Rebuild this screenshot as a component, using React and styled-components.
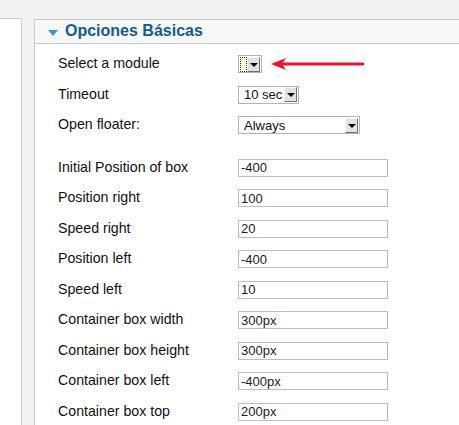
import React from 'react';
import styled, { createGlobalStyle } from 'styled-components';

const GlobalStyle = createGlobalStyle`
  html, body {
    margin: 0;
    padding: 0;
    background: #f2f2f2;
    font-family: "Liberation Sans", Arial, sans-serif;
    overflow: hidden;
  }
`;

const Page = styled.div`
  display: flex;
  gap: 12px;
  height: 425px;
`;

const SidePanel = styled.div`
  width: 21px;
  margin-top: 18px;
  background: #fff;
  border-top: 1px solid #cfcfcf;
  border-right: 1px solid #cfcfcf;
`;

const MainPanel = styled.div`
  flex: 1;
  margin-top: 19px;
  background: #fff;
  border-top: 1px solid #c8c8c8;
  border-left: 1px solid #c8c8c8;
`;

const Header = styled.div`
  display: flex;
  align-items: center;
  gap: 7px;
  height: 23px;
  padding-left: 13px;
  background: #f6f8f8;
  border-bottom: 1px solid #c8c8c8;
`;

const Toggle = styled.span`
  width: 0;
  height: 0;
  margin-top: 2px;
  border-left: 5px solid transparent;
  border-right: 5px solid transparent;
  border-top: 6px solid #3f92d2;
`;

const Title = styled.h3`
  margin: 0 0 2px;
  font-size: 16px;
  font-weight: 700;
  color: #155b8e;
`;

const Body = styled.div`
  padding: 5px 0 0 23px;
`;

const Form = styled.div`
  display: grid;
  grid-template-columns: 180px 1fr;
  grid-auto-rows: 30.5px;
  align-items: center;
  margin-top: ${p => p.$gap || 0}px;
`;

const Label = styled.div`
  font-size: 14.2px;
  color: #111;
  padding-bottom: 2px;
`;

const Control = styled.div`
  display: flex;
  align-items: center;
  gap: 9px;
`;

const SelectBox = styled.div`
  box-sizing: border-box;
  display: flex;
  align-items: center;
  width: ${p => p.$width}px;
  height: 18px;
  border: 1px solid #b4b4b4;
  background: #fff;
`;

const SelectValue = styled.span`
  flex: 1;
  font-size: 13px;
  color: #111;
  padding-left: 5px;
  white-space: nowrap;
  overflow: hidden;
`;

const Focus = styled.span`
  width: 7px;
  height: 15px;
  margin-left: 1px;
  border: 1px dotted #333;
  box-sizing: border-box;
  background: #fffbe0;
`;

const Spacer = styled.span`
  flex: 1;
`;

const DropButton = styled.span`
  box-sizing: border-box;
  display: flex;
  align-items: center;
  justify-content: center;
  width: 13px;
  height: 15px;
  margin-right: 1px;
  background: #e2e2e2;
  border: 1px solid;
  border-color: #f8f8f8 #6f6f6f #6f6f6f #f8f8f8;

  &::after {
    content: '';
    width: 0;
    height: 0;
    margin-top: 1px;
    border-left: 4px solid transparent;
    border-right: 4px solid transparent;
    border-top: 4px solid #000;
  }
`;

const TextInput = styled.input`
  box-sizing: border-box;
  width: 150px;
  height: 18px;
  margin: 0;
  padding: 0 2px;
  border: 1px solid #bdbdbd;
  font-family: "Liberation Sans", Arial, sans-serif;
  font-size: 13px;
  color: #1a1a2a;
  outline: none;
`;

function Select({ width, value, focused }) {
  return (
    <SelectBox $width={width}>
      {focused ? (
        <>
          <Focus />
          <Spacer />
        </>
      ) : (
        <SelectValue>{value}</SelectValue>
      )}
      <DropButton />
    </SelectBox>
  );
}

function Pointer() {
  return (
    <svg width="94" height="14" viewBox="0 0 94 14">
      <rect x="10" y="5.5" width="83" height="3" fill="#ea1430" />
      <polygon points="0,7 15,1 11,7 15,13" fill="#ea1430" />
    </svg>
  );
}

const fields = [
  ['Initial Position of box', '-400'],
  ['Position right', '100'],
  ['Speed right', '20'],
  ['Position left', '-400'],
  ['Speed left', '10'],
  ['Container box width', '300px'],
  ['Container box height', '300px'],
  ['Container box left', '-400px'],
  ['Container box top', '200px'],
];

export default function App() {
  return (
    <>
      <GlobalStyle />
      <Page>
        <SidePanel />
        <MainPanel>
          <Header>
            <Toggle />
            <Title>Opciones Básicas</Title>
          </Header>
          <Body>
            <Form>
              <Label>Select a module</Label>
              <Control>
                <Select width={24} focused />
                <Pointer />
              </Control>
              <Label>Timeout</Label>
              <Control>
                <Select width={61} value="10 sec" />
              </Control>
              <Label>Open floater:</Label>
              <Control>
                <Select width={122} value="Always" />
              </Control>
            </Form>
            <Form $gap={12}>
              {fields.map(([label, value]) => (
                <React.Fragment key={label}>
                  <Label>{label}</Label>
                  <Control>
                    <TextInput defaultValue={value} />
                  </Control>
                </React.Fragment>
              ))}
            </Form>
          </Body>
        </MainPanel>
      </Page>
    </>
  );
}
